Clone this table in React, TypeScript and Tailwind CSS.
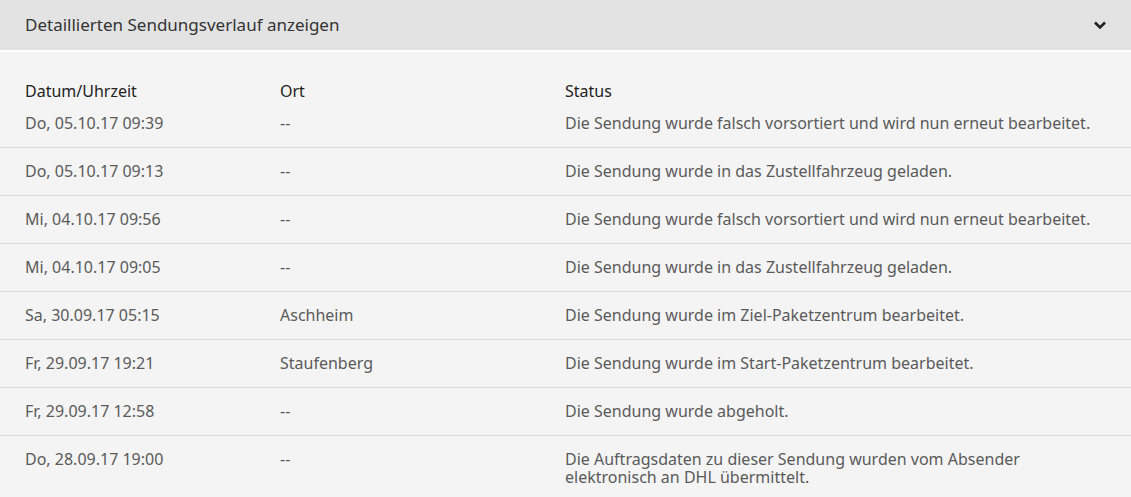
const rows: { date: string; place: string; status: React.ReactNode }[] = [
  { date: "Do, 05.10.17 09:39", place: "--", status: "Die Sendung wurde falsch vorsortiert und wird nun erneut bearbeitet." },
  { date: "Do, 05.10.17 09:13", place: "--", status: "Die Sendung wurde in das Zustellfahrzeug geladen." },
  { date: "Mi, 04.10.17 09:56", place: "--", status: "Die Sendung wurde falsch vorsortiert und wird nun erneut bearbeitet." },
  { date: "Mi, 04.10.17 09:05", place: "--", status: "Die Sendung wurde in das Zustellfahrzeug geladen." },
  { date: "Sa, 30.09.17 05:15", place: "Aschheim", status: "Die Sendung wurde im Ziel-Paketzentrum bearbeitet." },
  { date: "Fr, 29.09.17 19:21", place: "Staufenberg", status: "Die Sendung wurde im Start-Paketzentrum bearbeitet." },
  { date: "Fr, 29.09.17 12:58", place: "--", status: "Die Sendung wurde abgeholt." },
  {
    date: "Do, 28.09.17 19:00",
    place: "--",
    status: (
      <>
        Die Auftragsdaten zu dieser Sendung wurden vom Absender
        <br />
        elektronisch an DHL übermittelt.
      </>
    ),
  },
];

export default function App() {
  return (
    <div
      className="w-[1131px] h-[497px] overflow-hidden bg-[#f4f4f4] text-[16px]"
      style={{ fontFamily: '"Noto Sans", "Open Sans", sans-serif' }}
    >
      {/* Accordion header */}
      <div className="h-[50px] bg-[#e3e3e3] flex items-center justify-between pl-[25px] pr-[24px] border-b-2 border-white box-content">
        <span className="text-[17px] text-[#333333]">Detaillierten Sendungsverlauf anzeigen</span>
        <svg width="14" height="10" viewBox="0 0 14 10">
          <polyline points="2,2.5 7,7.5 12,2.5" fill="none" stroke="#222" strokeWidth="2.6" />
        </svg>
      </div>

      {/* Table */}
      <div className="pt-[29px]">
        <div className="grid grid-cols-[255px_285px_1fr] px-[25px] leading-[20px] text-[#222222]">
          <div>Datum/Uhrzeit</div>
          <div>Ort</div>
          <div>Status</div>
        </div>
        <div className="grid grid-cols-[255px_285px_1fr] px-[25px] pt-[13px] pb-[15px] leading-[18px] text-[#5a5a5a]">
          <div>{rows[0].date}</div>
          <div>{rows[0].place}</div>
          <div>{rows[0].status}</div>
        </div>
        {rows.slice(1).map((r, i) => (
          <div
            key={i}
            className="grid grid-cols-[255px_285px_1fr] px-[25px] pt-[14px] pb-[15px] leading-[18px] text-[#5a5a5a] border-t border-[#dcdcdc]"
          >
            <div>{r.date}</div>
            <div>{r.place}</div>
            <div>{r.status}</div>
          </div>
        ))}
      </div>
    </div>
  );
}
